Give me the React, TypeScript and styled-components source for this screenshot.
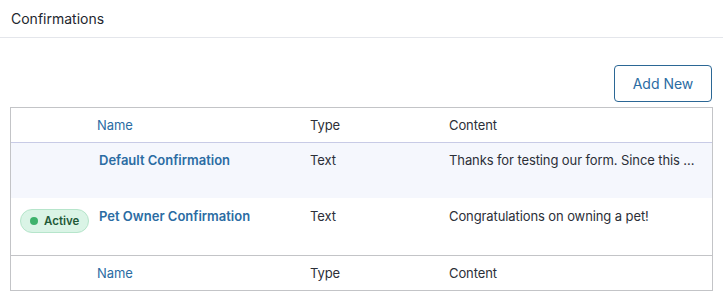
import styled, { createGlobalStyle } from 'styled-components'

const GlobalStyle = createGlobalStyle`
	*, *::before, *::after {
		box-sizing: border-box;
	}
	body {
		margin: 0;
		background: #ffffff;
		font-family: Inter, 'Noto Sans', sans-serif;
		color: #1e2127;
	}
`

const Page = styled.div`
	width: 723px;
`

const PageHeader = styled.div`
	height: 38px;
	padding: 0 11px 1px;
	display: flex;
	align-items: center;
	border-bottom: 1px solid #e4e6eb;
	font-size: 14px;
	color: #23262e;
`

const Toolbar = styled.div`
	display: flex;
	justify-content: flex-end;
	padding: 27px 11px 5px;
`

const AddButton = styled.button`
	width: 98px;
	height: 37px;
	border: 1px solid #2b6795;
	border-radius: 4px;
	background: #ffffff;
	color: #2b6ca3;
	font-family: inherit;
	font-size: 14px;
	cursor: pointer;
`

const Table = styled.div`
	margin: 0 10px;
	border: 1px solid #c3c4c7;
`

const Row = styled.div<{ $head?: boolean; $foot?: boolean; $alt?: boolean; $height: number }>`
	display: grid;
	grid-template-columns: 80px 213px 139px 1fr;
	height: ${({ $height }) => $height}px;
	background: ${({ $alt }) => ($alt ? '#f5f7fd' : '#ffffff')};
	border-bottom: ${({ $head }) => ($head ? '1px solid #c8cbe6' : 'none')};
	border-top: ${({ $foot }) => ($foot ? '1px solid #c3c4c7' : 'none')};
	font-size: 13px;
	line-height: 20px;
	letter-spacing: -0.1px;
`

const Cell = styled.div<{ $top: number }>`
	padding: ${({ $top }) => $top}px 6px 0;
	white-space: nowrap;
	overflow: hidden;
	color: #2c2f38;
`

const HeadLink = styled.span`
	color: #2b6ca3;
`

const NameLink = styled.a`
	padding-left: 2px;
	color: #2b6ca3;
	font-weight: 600;
	text-decoration: none;
	letter-spacing: 0;
`

const BadgeCell = styled.div`
	padding: 11px 0 0 9px;
`

const Badge = styled.span`
	display: inline-flex;
	align-items: center;
	gap: 6px;
	height: 24px;
	padding: 0 9px;
	border: 1px solid #b6e5cb;
	border-radius: 12px;
	background: #daf4e6;
	color: #1f5a38;
	font-size: 11.5px;
	font-weight: 600;
	letter-spacing: 0;
`

const Dot = styled.span`
	width: 8px;
	height: 8px;
	border-radius: 50%;
	background: #3eb26c;
`

const rows = [
	{ name: 'Default Confirmation', type: 'Text', content: 'Thanks for testing our form. Since this ...', active: false },
	{ name: 'Pet Owner Confirmation', type: 'Text', content: 'Congratulations on owning a pet!', active: true },
]

export default function App() {
	return (
		<Page>
			<GlobalStyle />
			<PageHeader>Confirmations</PageHeader>
			<Toolbar>
				<AddButton>Add New</AddButton>
			</Toolbar>
			<Table>
				<Row $head $height={35}>
					<Cell $top={7} />
					<Cell $top={7}>
						<HeadLink>Name</HeadLink>
					</Cell>
					<Cell $top={7}>Type</Cell>
					<Cell $top={7}>Content</Cell>
				</Row>
				{rows.map((r, i) => (
					<Row key={r.name} $alt={i === 0} $height={i === 0 ? 55 : 57}>
						<BadgeCell>
							{r.active && (
								<Badge>
									<Dot />
									Active
								</Badge>
							)}
						</BadgeCell>
						<Cell $top={i === 0 ? 7 : 8}>
							<NameLink href="#">{r.name}</NameLink>
						</Cell>
						<Cell $top={i === 0 ? 7 : 8}>{r.type}</Cell>
						<Cell $top={i === 0 ? 7 : 8}>{r.content}</Cell>
					</Row>
				))}
				<Row $foot $height={35}>
					<Cell $top={7} />
					<Cell $top={7}>
						<HeadLink>Name</HeadLink>
					</Cell>
					<Cell $top={7}>Type</Cell>
					<Cell $top={7}>Content</Cell>
				</Row>
			</Table>
		</Page>
	)
}
